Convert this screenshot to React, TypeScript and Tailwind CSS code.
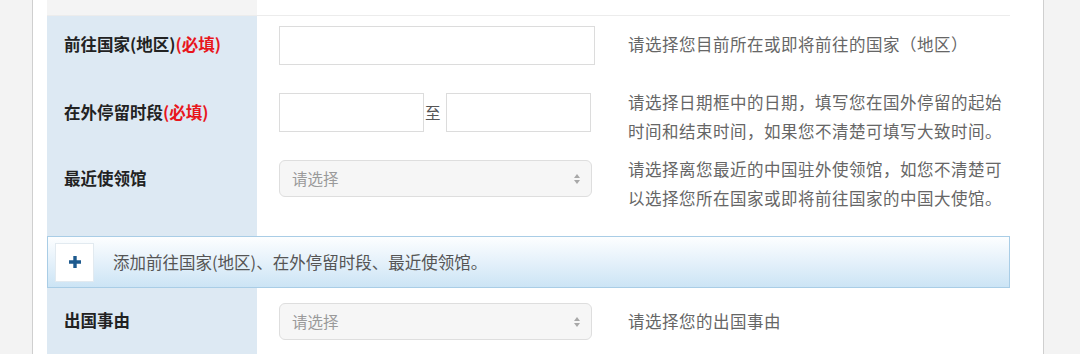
import type { ReactNode } from 'react'

const FONT = { fontFamily: '"Noto Sans CJK SC", "Liberation Sans", sans-serif' }

function Label({ children, pt }: { children: ReactNode; pt: string }) {
  return (
    <div className={`w-[210px] shrink-0 bg-[#dde9f3] pl-[17px] ${pt}`}>
      <div className="text-[16.5px] leading-[29px] font-bold text-[#222]">{children}</div>
    </div>
  )
}

function Help({ children, pt }: { children: ReactNode; pt: string }) {
  return (
    <div className={`w-[380px] ${pt} text-[16.5px] leading-[29px] tracking-[0.5px] text-[#666]`}>
      {children}
    </div>
  )
}

function Select({ w }: { w: string }) {
  return (
    <div className={`${w} h-[37px] rounded-[6px] border border-[#dedede] bg-[#f6f6f6] flex items-center justify-between pl-3 pr-[10px]`}>
      <span className="text-[15.5px] text-[#9a9a9a]">请选择</span>
      <svg width="8" height="14" viewBox="0 0 8 14">
        <path d="M4 2 L7 6 H1 Z" fill="#a8a8a8" />
        <path d="M4 12 L7 8 H1 Z" fill="#a8a8a8" />
      </svg>
    </div>
  )
}

export default function App() {
  return (
    <div className="w-[1080px] h-[354px] flex bg-[#f3f3f3] overflow-hidden" style={FONT}>
      <div className="w-[32px] shrink-0" />
      <div className="w-[1012px] shrink-0 bg-white border-x border-[#cfcfcf] pl-[14px]">
        <div className="w-[963px]">
          {/* top row remnant */}
          <div className="flex h-[16px] border-b border-[#ececec]">
            <div className="w-[210px] bg-[#f4f4f4]" />
          </div>

          {/* 前往国家 */}
          <div className="flex h-[67px]">
            <Label pt="pt-[14px]">
              前往国家(地区)<span className="text-[#e8161c]">(必填)</span>
            </Label>
            <div className="flex flex-1 pl-[22px] pt-[10px]">
              <div className="w-[316px] h-[39px] border border-[#dcdcdc] bg-white" />
              <div className="ml-[33px]">
                <Help pt="pt-[4px]">请选择您目前所在或即将前往的国家（地区）</Help>
              </div>
            </div>
          </div>

          {/* 在外停留时段 */}
          <div className="flex h-[67px]">
            <Label pt="pt-[15px]">
              在外停留时段<span className="text-[#e8161c]">(必填)</span>
            </Label>
            <div className="flex flex-1 pl-[22px] pt-[10px]">
              <div className="flex items-center h-[39px] w-[316px]">
                <div className="w-[145px] h-[39px] border border-[#dcdcdc] bg-white" />
                <span className="w-[22px] text-[15.5px] text-[#555] pl-[1px]">至</span>
                <div className="w-[145px] h-[39px] border border-[#dcdcdc] bg-white" />
              </div>
              <div className="ml-[33px] -mt-[5px]">
                <Help pt="pt-0">
                  请选择日期框中的日期，填写您在国外停留的起始时间和结束时间，如果您不清楚可填写大致时间。
                </Help>
              </div>
            </div>
          </div>

          {/* 最近使领馆 */}
          <div className="flex h-[86px]">
            <Label pt="pt-[14px]">最近使领馆</Label>
            <div className="flex flex-1 pl-[22px] pt-[10px]">
              <Select w="w-[313px]" />
              <div className="ml-[36px] -mt-[5px]">
                <Help pt="pt-0">
                  请选择离您最近的中国驻外使领馆，如您不清楚可以选择您所在国家或即将前往国家的中国大使馆。
                </Help>
              </div>
            </div>
          </div>

          {/* add bar */}
          <div className="h-[52px] border border-[#a9cde6] bg-gradient-to-b from-[#fdfeff] to-[#cce4f5] flex items-center pl-[7px]">
            <div className="w-[39px] h-[39px] bg-white border border-[#e2eaf0] flex items-center justify-center">
              <svg width="12" height="12" viewBox="0 0 12 12">
                <path d="M4.3 0 H7.7 V4.3 H12 V7.7 H7.7 V12 H4.3 V7.7 H0 V4.3 H4.3 Z" fill="#1d5a8e" />
              </svg>
            </div>
            <span className="ml-[19px] text-[16.5px] text-[#555]">添加前往国家(地区)、在外停留时段、最近使领馆。</span>
          </div>

          {/* 出国事由 */}
          <div className="flex h-[80px]">
            <Label pt="pt-[18px]">出国事由</Label>
            <div className="flex flex-1 pl-[22px] pt-[15px]">
              <Select w="w-[313px]" />
              <div className="ml-[36px]">
                <Help pt="pt-[4px]">请选择您的出国事由</Help>
              </div>
            </div>
          </div>
        </div>
      </div>
      <div className="flex-1" />
    </div>
  )
}
